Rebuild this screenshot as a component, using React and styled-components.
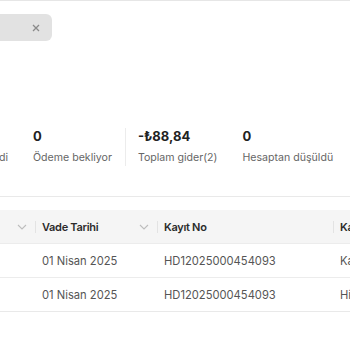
import React from "react";
import styled, { createGlobalStyle } from "styled-components";

const Global = createGlobalStyle`
  html, body { margin: 0; padding: 0; background: #fff; }
  body { font-family: Inter, "Noto Sans", sans-serif; overflow: hidden; }
  #root { width: 350px; height: 350px; overflow: hidden; }
`;

const Page = styled.div`
  width: 350px;
  height: 350px;
  border-top: 1px solid #e6e6e6;
  box-sizing: border-box;
  overflow: hidden;
`;

const Chip = styled.div`
  margin-top: 13px;
  width: 52px;
  height: 27px;
  background: #e2e2e2;
  border-radius: 0 6px 6px 0;
  display: flex;
  align-items: center;
  justify-content: flex-end;
  padding-right: 12px;
  box-sizing: border-box;
  color: #8a8a8a;
`;

const Stats = styled.div`
  display: flex;
  align-items: stretch;
  margin-top: 87px;
  white-space: nowrap;
`;

const Group = styled.div`
  display: flex;
  gap: 25px;
  padding: 0 ${p => p.$pr || 0}px 0 ${p => p.$pl || 0}px;
  border-left: ${p => (p.$divider ? "1px solid #ececec" : "none")};
`;

const Clipped = styled.div`
  width: 8px;
  display: flex;
  justify-content: flex-end;
`;

const Stat = styled.div`
  display: flex;
  flex-direction: column;
  gap: 6px;
`;

const Value = styled.div`
  font-size: 13px;
  font-weight: 700;
  color: #222;
  line-height: 16px;
`;

const Label = styled.div`
  font-size: 10.6px;
  color: #666;
  line-height: 16px;
`;

const Rule = styled.div`
  margin-top: 30px;
  border-top: 1px solid #e9e9e9;
`;

const Table = styled.div`
  margin-top: 13px;
  border-bottom: 1px solid #e9e9e9;
`;

const Row = styled.div`
  display: grid;
  grid-template-columns: 35px 122px 176px 1fr;
  height: ${p => (p.$head ? 33 : 34)}px;
  box-sizing: border-box;
  align-items: center;
  background: ${p => (p.$head ? "#f5f5f5" : "#fff")};
  border-top: ${p => (p.$head ? "none" : "1px solid #ececec")};
  white-space: nowrap;
  overflow: hidden;
`;

const HeadCell = styled.div`
  position: relative;
  display: flex;
  align-items: center;
  height: 12px;
  padding-left: 6px;
  font-size: 11px;
  font-weight: 600;
  letter-spacing: -0.3px;
  color: #2b2b2b;
  border-left: ${p => (p.$first ? "none" : "1px solid #e3e3e3")};
`;

const Chevron = styled.span`
  position: absolute;
  right: 8px;
  top: 50%;
  transform: translateY(-50%);
  display: flex;
  color: #bdbdbd;
`;

const Cell = styled.div`
  padding-left: 7px;
  font-size: 11.2px;
  color: #555;
`;

const ChevronIcon = () => (
  <svg width="10" height="6" viewBox="0 0 10 6" fill="none">
    <path d="M1 1l4 4 4-4" stroke="currentColor" strokeWidth="1.1" />
  </svg>
);

const XIcon = () => (
  <svg width="8" height="8" viewBox="0 0 8 8" fill="none">
    <path d="M1 1l6 6M7 1L1 7" stroke="currentColor" strokeWidth="1.3" />
  </svg>
);

const rows = [
  { date: "01 Nisan 2025", no: "HD12025000454093", last: "Kasa" },
  { date: "01 Nisan 2025", no: "HD12025000454093", last: "Hizmet" },
];

export default function App() {
  return (
    <Page>
      <Global />
      <Chip>
        <XIcon />
      </Chip>
      <Stats>
        <Group $pr={13}>
          <Clipped>
            <Stat>
              <Value>0</Value>
              <Label>Ödendi</Label>
            </Stat>
          </Clipped>
          <Stat>
            <Value>0</Value>
            <Label>Ödeme bekliyor</Label>
          </Stat>
        </Group>
        <Group $divider $pl={12}>
          <Stat>
            <Value>-₺88,84</Value>
            <Label>Toplam gider(2)</Label>
          </Stat>
          <Stat>
            <Value>0</Value>
            <Label>Hesaptan düşüldü</Label>
          </Stat>
        </Group>
      </Stats>
      <Rule />
      <Table>
        <Row $head>
          <HeadCell $first>
            <Chevron>
              <ChevronIcon />
            </Chevron>
          </HeadCell>
          <HeadCell>
            Vade Tarihi
            <Chevron>
              <ChevronIcon />
            </Chevron>
          </HeadCell>
          <HeadCell>Kayıt No</HeadCell>
          <HeadCell>Kategori</HeadCell>
        </Row>
        {rows.map((r, i) => (
          <Row key={i}>
            <Cell />
            <Cell>{r.date}</Cell>
            <Cell>{r.no}</Cell>
            <Cell>{r.last}</Cell>
          </Row>
        ))}
      </Table>
    </Page>
  );
}
